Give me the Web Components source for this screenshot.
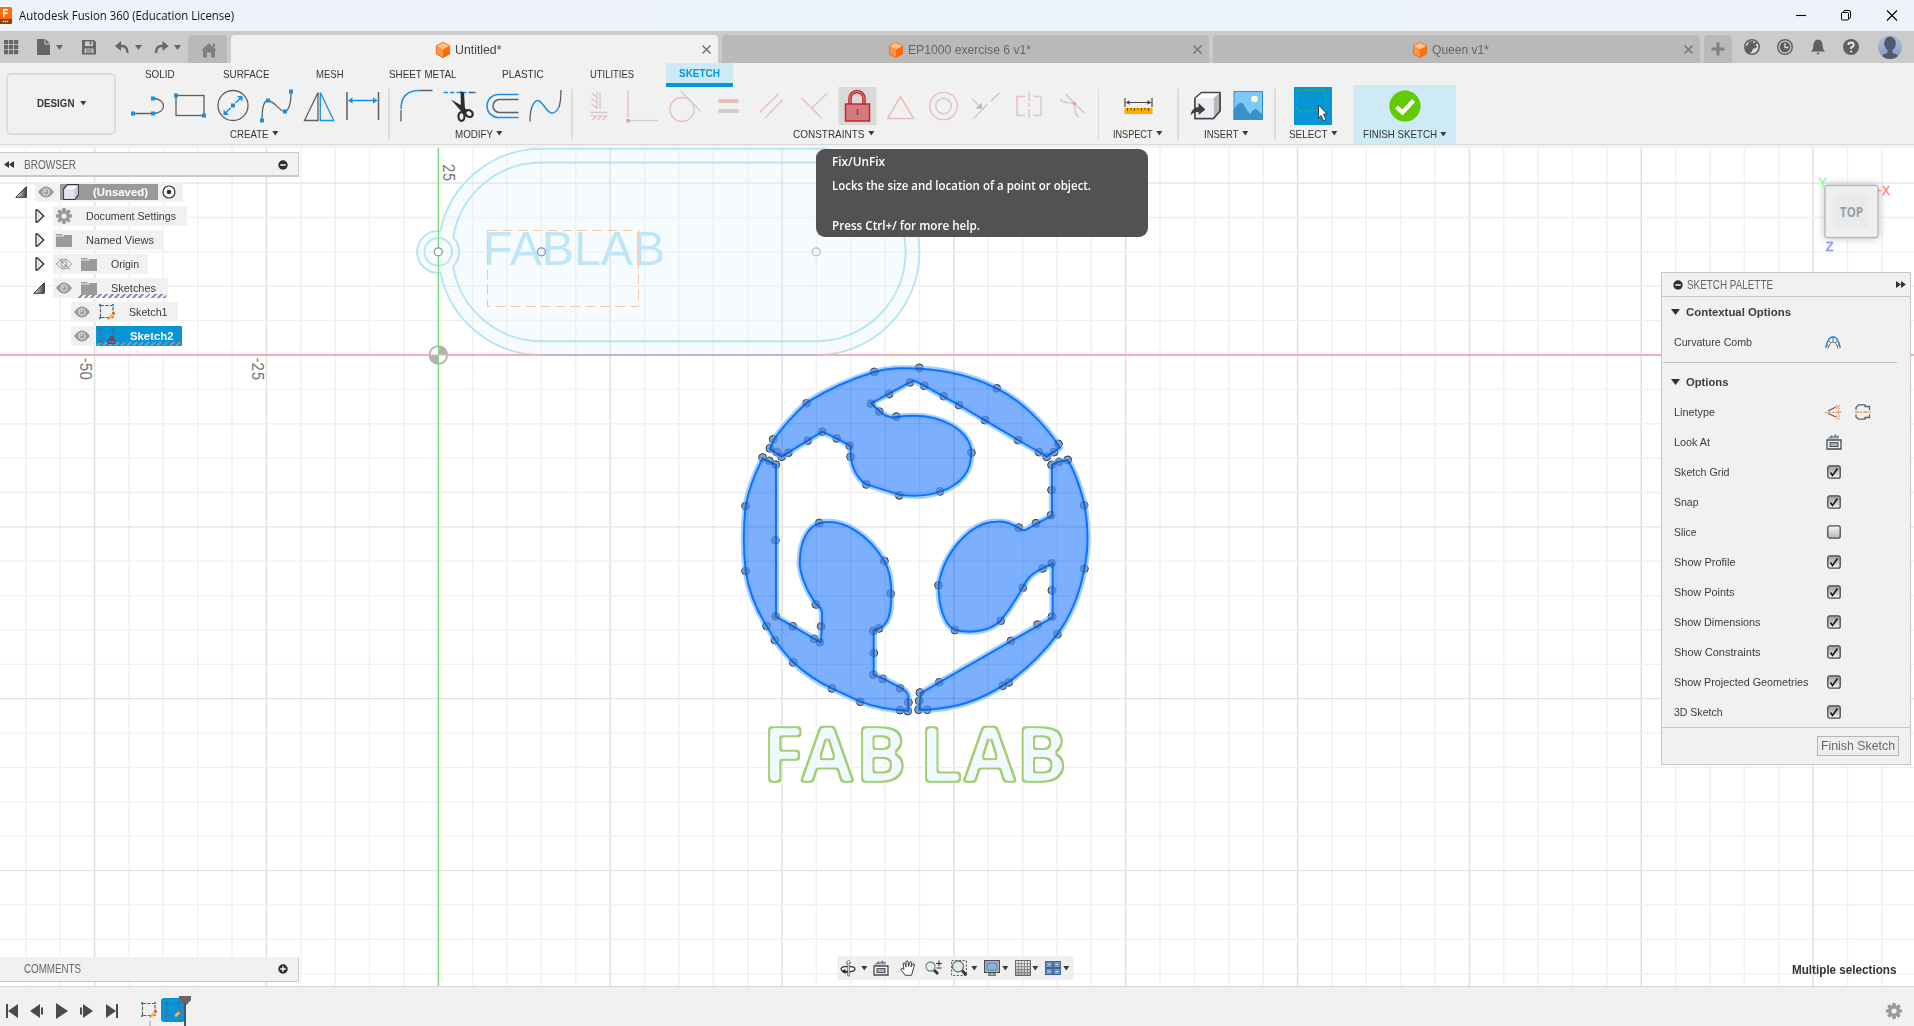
<!DOCTYPE html>
<html lang="en">
<head>
<meta charset="utf-8">
<title>Autodesk Fusion 360</title>
<style>
html,body{margin:0;padding:0;width:1914px;height:1026px;overflow:hidden;background:#fff;font-family:"Liberation Sans",Arial,sans-serif;font-size:11px;color:#3c3c3c}
</style>
</head>
<body>
<fusion-app></fusion-app>
<script>
const B='#1a8fe6',G='#5f5f5f',P='#ebbcbc',L='#cdcdcd';
const sq=(x,y)=>`<rect x="${x-2}" y="${y-2}" width="4" height="4" fill="${B}"/>`;
const ln=(d,c=G,w=1.3,x='')=>`<path d="${d}" fill="none" stroke="${c}" stroke-width="${w}" ${x}/>`;
const cubeTab='<path d="M7 0 14 3.6V12L7 16 0 12V3.6Z" fill="#ff6d0a"/><path d="M7 0 14 3.6 7 7.6 0 3.6Z" fill="#ffc190"/><path d="M0 3.6 7 7.6V16L0 12Z" fill="#ff9447"/><path d="M7 .4 13.600 3.800V11.800L7 15.600 .4 11.800V3.800Z" fill="none" stroke="#d9722b" stroke-width=".8"/>';
const gear=c=>`<g fill="${c}"><path fill-rule="evenodd" d="M8 2.3a5.7 5.7 0 1 0 0 11.4a5.7 5.7 0 1 0 0-11.4zM8 5.4a2.6 2.6 0 1 1 0 5.2a2.6 2.6 0 1 1 0-5.2z"/>${[0,45,90,135,180,225,270,315].map(a=>`<path d="M6.4 0H9.6L10 3.2H6Z" transform="rotate(${a} 8 8)"/>`).join('')}</g>`;
const lookAt='<path d="M1 6V15H15V6Z" fill="#f4f5f7" stroke="#45494f" stroke-width="1.3"/><rect x="4" y="8.6" width="8" height="4" fill="#a9b4c4" stroke="#45494f"/><path d="M2 4.6 6 1.6 5 4 10 .8 9.5 3.2 12.5 2 11.5 4.6" fill="#9aa3ad" stroke="#6a7077" stroke-width=".9"/>';
const sketch=(c,b)=>`<rect x="1.5" y="1.5" width="12.5" height="12" fill="none" stroke="${c}" stroke-dasharray="3.4 1.3" stroke-width="1.2"/><g fill="${b}"><rect width="2" height="2"/><rect x="13" width="2" height="2"/><rect y="13" width="2" height="2"/></g>`;
const pencil='<path d="M9 15.3 8.2 16 9.6 13.4 10.8 15Z" fill="#666"/><path d="M9.2 13.2 13.6 9 15.4 11.2 11 15.2Z" fill="#f7b93c"/><path d="M13 8.8 14.4 7.6 16.4 9.6 15 11Z" fill="#ee3d4a"/>';
const eye='<path d="M0 8Q8 -3 16 8Q8 19 0 8Z" fill="#999"/><circle cx="8" cy="8" r="3.200" fill="none" stroke="#f1f1f1" stroke-width="1"/><circle cx="7.500" cy="7.500" r=".9" fill="#f1f1f1"/>';
const arrow='M0 0H7L3.5 5Z';
const ICONS={
 app:['0 7 12 17',`<path d="M0 7H10.5Q12 7 12 8.5V22.5Q12 24 10.5 24H0Z" fill="#ff6a13"/><path d="M0 19H12V22.5Q12 24 10.5 24H0Z" fill="#8f3c08"/><path d="M3.8 17V9.8H8.2M3.8 13.2H7.6" fill="none" stroke="#fff" stroke-width="1.5"/><path d="M2.5 21.5H8.5" stroke="#f3c9ae" stroke-width="1.5" stroke-dasharray="1.5 .6"/>`],
 min:['1795 9 12 13',ln('M1796 15.5H1806','#000',1.1)],
 max:['1840 9 12 13',`<rect x="1841.5" y="12.5" width="7" height="7.5" rx="1" fill="none" stroke="#000"/>`+ln('M1843.5 12.5V11.5Q1843.5 10.5 1845 10.5H1849Q1850.500 10.5 1850.500 12V17Q1850.500 18.5 1849 18.5','#000',1)],
 cls:['1886 9 12 13',ln('M1887 10.500 1897 20.500M1897 10.500 1887 20.500','#000',1.1)],
 apps:['4 40 15 15',[0,1,2].map(i=>[0,1,2].map(j=>`<rect x="${4+i*5}" y="${40+j*5}" width="4.2" height="4.200" fill="#666"/>`).join('')).join('')],
 file:['37 39 13 16','<path d="M37 39H44.500V44.500H50V55H37Z M45.500 39 50 43.500H45.500Z" fill="#666"/>'],
 save:['82 40 14 14.500','<path fill-rule="evenodd" d="M82 40H94L96 42V54.500H82ZM85 41.500V46H93V41.500ZM84.500 48.500V53H93.500V48.500Z" fill="#666"/><path d="M86 50H92M86 52H92" stroke="#666"/><rect x="89.500" y="41.500" width="2" height="3" fill="#666"/>'],
 undo:['115 41 14 12',ln('M119 46H122Q127.500 46 127.500 53','#666',2.300)+'<path d="M115 46 121 41V51Z" fill="#666"/>'],
 redo:['155 41 14 12',ln('M165 46H161.500Q156 46 156 53','#666',2.300)+'<path d="M168.500 46 162.500 41V51Z" fill="#666"/>'],
 dd:['0 0 7 5',`<path d="${arrow}" fill="#666"/>`],
 ddk:['0 0 7 5',`<path d="M.3 0H6.300L3.300 4.500Z" fill="#3a3a3a"/>`],
 home:['201 43 16 14.500','<path d="M209 43 217 50.500H215V57.500H211V52.500H207V57.500H203V50.500H201Z M213 43.500H215V47H213Z" fill="#808080"/>'],
 cube:['0 0 14 16',cubeTab],
 x:['0 0 9 9',ln('M.5 .5 8.500 8.500M8.500 .5 .5 8.500','#777',1.6)],
 plus:['0 0 14 14',ln('M7 .5V13.500M.5 7H13.500','#808080',3)],
 ext:['1744 39 16 16','<circle cx="1752" cy="47" r="7.200" fill="#dedede" stroke="#5f5f5f" stroke-width="1.600"/><path d="M1745.500 51V46.500L1748.500 44V42L1753.500 40.500 1753 43.500 1755.500 42 1757.500 43 1755 45.500 1757.500 46 1755.500 48.500 1753 48.500 1752 51.500 1749 54Z" fill="#5f5f5f"/>'],
 clock:['1777 39 16 16','<circle cx="1785" cy="47" r="7.300" fill="none" stroke="#5f5f5f" stroke-width="1.500"/><circle cx="1785" cy="47" r="5.300" fill="#5f5f5f"/><path d="M1785 43V47.500H1788.500" fill="none" stroke="#ddd" stroke-width="1.300"/>'],
 bell:['1810 39 16 16','<path d="M1818 39.500Q1822.500 40 1822.500 45Q1822.500 49 1825 51.500H1811Q1813.500 49 1813.500 45Q1813.500 40 1818 39.500Z" fill="#5f5f5f"/><path d="M1816 52.800H1820L1818 54.800Z" fill="#5f5f5f"/>'],
 help:['1843 39 16 16','<circle cx="1851" cy="47" r="8" fill="#5f5f5f"/><path d="M1848.300 45Q1848.300 42.500 1851 42.500T1853.700 45Q1853.700 46.500 1851.200 47.500V49M1851.200 50.600V52.500" fill="none" stroke="#e8e8e8" stroke-width="1.900"/>'],
 avatar:['1878 35 24 24','<defs><linearGradient id="a" x2="0" y2="1"><stop stop-color="#b3c2d6"/><stop offset="1" stop-color="#8197bd"/></linearGradient><clipPath id="c"><circle cx="1890" cy="47" r="12"/></clipPath></defs><circle cx="1890" cy="47" r="12" fill="url(#a)"/><g clip-path="url(#c)" fill="#4d5a70"><ellipse cx="1890" cy="43.500" rx="5.800" ry="7"/><path d="M1887.500 48H1892.500V53Q1898 54 1900 59H1880Q1882 54 1887.500 53Z"/></g>'],
 line:['126.5 87 43 38',ln('M133.500 113.500H153.500C160 113.500 164 110 164 106S160 98.500 153.500 98.500')+sq(133.500,113.500)+sq(153.500,113.500)+sq(153.500,98.500)],
 rect:['169.5 87 43 38',`<rect x="176.500" y="95.500" width="28" height="20" fill="none" stroke="${G}" stroke-width="1.300"/>`+sq(176.500,95.500)+sq(204.500,115.500)],
 circ:['212.5 87 43 38',`<circle cx="233.500" cy="105.500" r="15" fill="none" stroke="${G}" stroke-width="1.300"/>`+ln('M226 113 231 108M236 103 241 98',B,1.500)+sq(233.500,105.500)+`<path d="M224 115V109.500L229.500 115ZM243 96V101.500L237.500 96Z" fill="${B}"/>`],
 spl:['255.5 87 43 38',ln('M262.500 120.500C262.500 108 264 100.500 268.500 100.500C275 101 280 111.500 285.500 111.500C290 110 291.500 102 291.500 91.500')+sq(262.500,120.500)+sq(268.500,100.500)+sq(285.500,111.500)+sq(291.500,91.500)],
 mir:['298.5 87 43 38',ln('M318.500 92.500V120.500H305Z')+ln('M320.800 92.500V120.500H334.300Z',B)],
 dim:['341.5 87 43 38',ln('M347.500 92V120M379 92V120',G,1.500)+ln('M350 100.500H377',B,1.500)+`<path d="M348.500 100.500 353 97.500V103.500ZM378 100.500 373.500 97.500V103.500Z" fill="${B}"/>`],
 fil:['395.5 87 43 38',ln('M401.500 110V121.500M420 90.500H433')+ln('M401.500 109Q401.500 90.500 420 90.500',B,1.500)],
 cut:['438.5 87 43 38',ln('M444 92.500H467',B,1.500,'stroke-dasharray="4.500 2"')+ln('M469 92.500H476',G,1.500)+'<path d="M461 91 464.500 92.500 465.500 109 461.500 111ZM451.500 99.500 463 106 468.500 111 464 114Z" fill="#2e2e2e"/><g fill="none" stroke="#2e2e2e" stroke-width="2.200"><ellipse cx="462" cy="116.500" rx="3" ry="4.300"/><ellipse cx="469.500" cy="113.500" rx="4" ry="3.200" transform="rotate(35 469.500 113.500)"/></g>'],
 off:['481.5 87 43 38',ln('M519 94.500H499A11.500 11.500 0 0 0 499 117.500H519',B,1.600)+ln('M519 99.500H500A6.500 6.500 0 0 0 500 112.500H519',G,1.500)],
 sp2:['524.5 87 43 38',ln('M530.500 121.500Q530.500 112 532.500 107M559.500 107Q561.500 101 561.500 90')+ln('M532.500 107C537 96 541 101 546 108S555 115 559.500 107',B,1.500)],
 hv:['578.5 87 43 38',ln('M592 93 597 97M592 98.500 597 102.500M592 104 597 108M597.500 92V109',P,1.200)+ln('M600.500 92V109M591 112.500H608',L,1.300)+ln('M591 116H608M597 116 593 120M602 116 598 120M607 116 603 120',P,1.200)],
 perp:['621.5 87 43 38',ln('M628.500 90V118',P)+ln('M630 120.500H659',L)+`<rect x="627" y="119" width="3.500" height="3.500" fill="#e2a1a1"/>`],
 tan:['664.5 87 43 38',`<circle cx="682.500" cy="109.500" r="12" fill="none" stroke="${P}" stroke-width="1.300"/>`+ln('M681 91 701 111',L)],
 eq:['707.5 87 43 38',`<rect x="719" y="99" width="20" height="4" fill="${P}"/><rect x="719" y="109" width="20" height="4" fill="${L}"/>`],
 par:['750.5 87 43 38',ln('M760 112.500 779 94',P,1.500)+ln('M765.500 118 783.500 99.500',L,1.500)],
 per2:['793.5 87 43 38',ln('M802 98 822.500 118.500',P,1.500)+ln('M812 108.500 827.500 93.500',L,1.500)],
 lock:['836.5 87 43 38',`<rect x="839" y="87" width="38" height="38" fill="#d9d9d9"/>`+ln('M850.500 104V98.500A7 7 0 0 1 864.500 98.500V104','#c9252d',3.600)+ln('M850.500 104V98.500A7 7 0 0 1 864.500 98.500V104','#e38d90',1)+`<rect x="846" y="104" width="24" height="17" fill="#d27c7f" stroke="#c9252d" stroke-width="1.500"/><path d="M858 109V115" stroke="#c9252d" stroke-width="1.500"/>`],
 tri:['879.5 87 43 38',ln('M901 96.500 914 118.500H888Z',P,1.500)],
 con:['922.5 87 43 38',`<circle cx="944" cy="106" r="13.700" fill="none" stroke="${P}" stroke-width="1.300"/><circle cx="944" cy="106" r="7.800" fill="none" stroke="${L}" stroke-width="1.500"/>`],
 mid:['965.5 87 43 38',ln('M974 119 988 104M973 99 980 106',L,1.500)+ln('M991 101.500 1000 93',P,1.500)+'<path d="M982.500 109V102.500L976 108.500Z" fill="#bdbdbd"/>'],
 sym:['1008.5 87 43 38',ln('M1025.500 96.500H1017.500V115.500H1025.500',P,1.500)+ln('M1029.700 92V120',P,1.300,'stroke-dasharray="9 2 4 2"')+ln('M1034 96.500H1041.500V115.500H1034',L,1.500)],
 cur:['1051.5 87 43 38',ln('M1066 94 1084.500 113',P,1.500)+ln('M1061 99.500Q1063 102.500 1069 102.500T1075.500 108Q1075 115 1079.500 117',L,1.500)+'<circle cx="1075" cy="103.500" r="1.800" fill="#e2a1a1"/>'],
 meas:['1117.5 87 43 38','<rect x="1125" y="108" width="28" height="6" fill="#ffab00"/>'+ln('M1128 108V111M1131.500 108V110M1135 108V111M1138.500 108V110M1142 108V111M1145.500 108V110M1149 108V111','#6b4a00',1)+ln('M1125.500 98V107M1152.500 98V107M1127 102.500H1151','#4a4a4a',1.200)+'<path d="M1126 102.500 1130 100.300V104.700ZM1152 102.500 1148 100.300V104.700Z" fill="#4a4a4a"/>'],
 ins:['1184.5 87 43 38','<path d="M1195.500 98 1202 92.500H1220.500V111L1214 118.500H1195.500Z" fill="#fff" stroke="#45454d" stroke-width="1.500"/><path d="M1214 98 1220 93V111L1214 118Z" fill="#b6b8be"/><path d="M1195.500 98H1214V118.500H1195.500Z" fill="#ececf0"/><path d="M1195.500 98V118.500H1214L1220.500 111V92.500" fill="none" stroke="#45454d" stroke-width="1.500"/><path d="M1191 115.500Q1192 107.500 1199 107V103L1206 109.500 1199 115V112Q1194 111.500 1191 115.500Z" fill="#3f4046"/>'],
 img:['1227.5 87 43 38','<rect x="1234.500" y="91.500" width="28.500" height="28" fill="#7cc8fb" stroke="#3c8fc9"/><path d="M1234 110Q1240 100 1244 104 1248 112 1251 114 1255 107 1258 110L1263 115V120H1234Z" fill="#3c90ca"/><circle cx="1255" cy="99" r="3.300" fill="#fffbc9"/>'],
 sel:['1294 87 38 38','<rect x="1294" y="87" width="38" height="38" fill="#0696d7"/><rect x="1297.500" y="90.500" width="28" height="20.500" fill="none" stroke="#2eb35c" stroke-width="1.200" stroke-dasharray="4 2"/><path d="M1318.500 105 1327 114H1323.500L1326 120 1323.500 121 1321.200 115.500 1318.500 118Z" fill="#fff" stroke="#333" stroke-width=".9"/>'],
 fin:['1388 90 32 32','<circle cx="1404" cy="106" r="15.600" fill="#62cb00"/><path d="M1395.500 107 1401.500 112.500 1412.500 100.500" fill="none" stroke="#fff" stroke-width="4.200"/>'],
 rew:['0 0 10 7','<path d="M5 0V7L0 3.500ZM10 0V7L5 3.500Z" fill="#333"/>'],
 fwd:['0 0 10 7','<path d="M0 0V7L5 3.500ZM5 0V7L10 3.500Z" fill="#333"/>'],
 minus:['0 0 10 10','<circle cx="5" cy="5" r="4.700" fill="#2f2f2f"/><path d="M2.300 5H7.700" stroke="#fff" stroke-width="1.500"/>'],
 add:['0 0 10 10','<circle cx="5" cy="5" r="4.700" fill="#2f2f2f"/><path d="M2.300 5H7.700M5 2.300V7.700" stroke="#fff" stroke-width="1.300"/>'],
 open:['0 0 12 12','<defs><linearGradient id="g"><stop stop-color="#eee"/><stop offset="1" stop-color="#444"/></linearGradient></defs><path d="M11.300 .7V11.300H.8Z" fill="url(#g)" stroke="#333"/>'],
 shut:['0 0 10 14','<path d="M1 1H2.500L8.800 7 2.500 13H1Z" fill="#e6e6e6" stroke="#333" stroke-width="1.300"/>'],
 eye:['0 0 16 16',eye],
 noeye:['0 0 16 16','<path d="M.5 8Q8 -2 15.500 8Q8 18 .5 8Z" fill="none" stroke="#8c8c8c"/><circle cx="8" cy="8" r="3" fill="none" stroke="#8c8c8c"/><path d="M3 2.500 13.500 13.500" stroke="#8c8c8c"/>'],
 gear:['0 0 16 16',gear('#9a9a9a')],
 folder:['0 0 16 16','<path d="M0 2H6L7 3.500H0ZM0 4.500H7.500L8.500 3H16V15H0Z" fill="#9a9a9a"/>'],
 box:['0 0 16 16','<path d="M.7 5 4.500 .7H15.300V10.500L12 15.300H.7Z" fill="#fafafa" stroke="#333a44" stroke-width="1.200"/><path d="M1.300 5H11.500V14.700H1.300Z" fill="#e2e4ee"/><path d="M11.500 5 14.700 1.200V10.300L11.500 14.700Z" fill="#c6c9d6"/>'],
 radio:['0 0 14 14','<circle cx="7" cy="7" r="6" fill="#fff" stroke="#333" stroke-width="1.200"/><circle cx="7" cy="7" r="2.300" fill="#333"/>'],
 sk:['0 0 17 17',sketch('#5f5f5f',B)+pencil],
 skb:['0 0 17 17',sketch('#4f6a7c','#3c6f90')+pencil],
 skr:['0 0 17 17',sketch('#4f6a7c','#50687a')+'<path d="M9.500 11.500H15.500V15.500H9.500ZM11 11.500V9.500Q12.500 8 14 9.500V11.500" fill="none" stroke="#c0202a" stroke-width="1.200"/><rect x="12" y="12.500" width="1.200" height="2" fill="#c0202a"/>'],
 comb:['0 0 16 13',ln('M.7 12Q3 .8 8 .8T15.300 12',B,1.400)+ln('M3 12.500Q5 6 8 6T13 12.500M8 1V6M3.500 4.500 6 7M12.500 4.500 10 7M1.500 9 4 10M14.500 9 12 10','#6a6a6a',1)],
 lt1:['0 0 17 16',ln('M3 7 11 3M3 9.500 11 13','#5f5f5f',1.200)+ln('M0 8.300H17M11 1 15 5M15 1 11 5M11 11.500 15 15.500M15 11.500 11 15.500M13.500 6V10.500','#e8853d',1,'stroke-dasharray="2.500 1"')],
 lt2:['0 0 16 16',ln('M1 6V3.500L3.500 .8H10V2.500H14.500V6M1 10.500V13L3.500 15.200H10V13.500H14.500V10.500','#5f5f5f',1.300)+ln('M0 8.200H16','#e8853d',1.300,'stroke-dasharray="4 1.200 2 1.200"')],
 look:['0 0 16 16',lookAt],
 on:['0 0 14 14','<defs><linearGradient id="k" x2="0" y2="1"><stop stop-color="#9b9b9b"/><stop offset="1" stop-color="#f2f2f2"/></linearGradient></defs><rect x=".8" y=".8" width="12.400" height="12.400" rx="2" fill="url(#k)" stroke="#4a4a4a" stroke-width="1.300"/><path d="M3.500 7.500 5.500 10.500 10.500 3.500" fill="none" stroke="#111" stroke-width="1.500"/>'],
 offc:['0 0 14 14','<defs><linearGradient id="k" x2="0" y2="1"><stop stop-color="#f8f8f8"/><stop offset="1" stop-color="#b5b5b5"/></linearGradient></defs><rect x=".8" y=".8" width="12.400" height="12.400" rx="2" fill="url(#k)" stroke="#4a4a4a" stroke-width="1.300"/>'],
 down:['0 0 9 6','<path d="M0 0H9L4.500 6Z" fill="#2f2f2f"/>'],
 orb:['0 0 16 16','<ellipse cx="8" cy="9" rx="7" ry="2.700" fill="none" stroke="#333" stroke-width="1.300"/><path d="M8.500 0 11 3H9.300V16H7.700V3H6Z" fill="#fff" stroke="#555" stroke-width=".8"/><path d="M1.500 11.500 5.500 9V11H8V12.500H5.500V14Z" fill="#222"/>'],
 hand:['0 0 16 16','<path d="M5 15.300Q2 11 .8 9Q2 7.500 4 9.500L3 3.500Q4 2.300 5 3.500L6 7 6 1.500Q7.200 .3 8 1.500L8.500 6.500 10 1.800Q11.200 1 11.800 2.300L11 7 13 4Q14.500 3.500 14.500 5L13 10 11.500 15.300Z" fill="#fff" stroke="#444" stroke-width="1"/>'],
 zoom:['0 0 17 16','<circle cx="5.500" cy="6.500" r="4.500" fill="#e4eff0" stroke="#7a868c" stroke-width="1.300"/><path d="M9 10 13 14" stroke="#333" stroke-width="2.800"/><path d="M11 3.500H17M14 .5V6.200M11.500 8H16.500" stroke="#333" stroke-width="1.100"/>'],
 zwin:['0 0 16 16','<rect x=".6" y=".6" width="14.800" height="14.800" fill="none" stroke="#555" stroke-dasharray="2.200 1.500"/><circle cx="7" cy="6.500" r="5.500" fill="#dcebea" stroke="#6a767c" stroke-width="1.300"/><path d="M11 10.500 15.300 15" stroke="#333" stroke-width="2.800"/>'],
 disp:['0 0 16 16','<rect x=".7" y=".7" width="14.600" height="11.600" fill="#f5f5f5" stroke="#444" stroke-width="1.300"/><rect x="2.800" y="2.800" width="10.400" height="7.400" fill="#8db2e0" stroke="#4a6fa3"/><path d="M4.500 15.300V14L8 12.800 11.500 14V15.300Z" fill="#eee" stroke="#444"/>'],
 grid:['0 0 16 16','<defs><linearGradient id="q" x2="0" y2="1"><stop stop-color="#fff"/><stop offset="1" stop-color="#aab3c0"/></linearGradient></defs><rect x=".6" y=".6" width="14.800" height="14.800" fill="url(#q)" stroke="#555"/><path d="M3.600 0V16M6.600 0V16M9.500 0V16M12.500 0V16M0 3.600H16M0 6.600H16M0 9.500H16M0 12.500H16" stroke="#777" stroke-width=".8"/>'],
 view:['0 0 16 14','<g fill="#8fb4dd" stroke="#3f608f" stroke-width="1.300"><rect x=".7" y=".7" width="6.600" height="5.700"/><rect x="8.700" y=".7" width="6.600" height="5.700"/><rect x=".7" y="7.700" width="6.600" height="5.700"/><rect x="8.700" y="7.700" width="6.600" height="5.700"/></g><path d="M2.500 2.500H5.500V4.500H2.500ZM10.500 2.500H13.500V4.500H10.500ZM2.500 9.500H5.500V11.500H2.500ZM10.500 9.500H13.500V11.500H10.500Z" fill="#c3d8f0" stroke="#5c83b8" stroke-width=".7"/>'],
 t1:['0 0 12 14','<path d="M0 0H2V14H0ZM12 0V14L2 7Z" fill="#4a4a4a"/>'],
 t2:['0 0 13 14','<path d="M10 0V14L0 7ZM11 3.500H13V10.500H11Z" fill="#4a4a4a"/>'],
 t3:['0 0 12 16','<path d="M0 0 12 8 0 16Z" fill="#4a4a4a"/>'],
 t4:['0 0 13 14','<path d="M3 0 13 7 3 14ZM0 3.500H2V10.500H0Z" fill="#4a4a4a"/>'],
 t5:['0 0 12 14','<path d="M12 0H10V14H12ZM0 0V14L10 7Z" fill="#4a4a4a"/>'],
 mark:['179 996 12 30','<path d="M179 996H191V1000L187 1004.500H183L179 1000Z" fill="#666"/><path d="M185 1003V1026" stroke="#555" stroke-width="2"/>'],
};
const el=(name,css,html,after)=>customElements.define(name,class extends HTMLElement{
 connectedCallback(){
  if(!this.shadowRoot){const r=this.attachShadow({mode:'open'});
   const t=document.createElement('template');
   t.innerHTML=`<style>:host{box-sizing:border-box}*{box-sizing:border-box}${css}</style>`+(typeof html==='function'?html(this):html);
   r.appendChild(document.importNode(t.content,true));}
  if(after)after(this);
 }});
const ic=(n,ml=0,mt=0)=>`<ui-icon name="${n}" style="margin-left:${ml}px;margin-top:${mt}px"></ui-icon>`;
const ft=(t,w,st='')=>`<fit-text w="${w}" style="${st}">${t}</fit-text>`;

el('ui-icon',':host{display:block;flex:none}svg{display:block;overflow:visible}',h=>{
 const [vb,m]=ICONS[h.getAttribute('name')];const [, ,w,hh]=vb.split(' ');
 return `<svg width="${w}" height="${hh}" viewBox="${vb}">${m}</svg>`});
el('fit-text',':host{display:block;flex:none;white-space:nowrap;line-height:16px}span{display:inline-block;transform-origin:0 50%}','<span><slot></slot></span>',h=>{
 const w=+h.getAttribute('w'),s=h.shadowRoot.querySelector('span');h.style.width=w+'px';
 const n=s.getBoundingClientRect().width;if(n)s.style.transform=`scaleX(${w/n})`});

el('title-bar',`:host{display:flex;align-items:center;height:31px;background:linear-gradient(90deg,#ecf3f9,#eef2fb 20%,#ebf4f8 55%,#eef3fb 75%,#eef3fa);font:12px "Open Sans","Noto Sans",sans-serif;color:#111}`,
 ic('app')+ft('Autodesk Fusion 360 (Education License)',215,'margin-left:7px')+ic('min',1561)+ic('max',33)+ic('cls',34));

el('doc-tab',`:host{display:flex;align-items:center;height:28px;border-radius:4px 4px 0 0;background:#b9b9b9;color:#666;font-size:12px;margin-left:4px}:host([active]){background:#f1f1f1;color:#444}.e{margin-left:auto;margin-right:7px;margin-top:0}`,
 '<slot></slot><ui-icon class="e" name="x"></ui-icon>');
el('tab-bar',`:host{display:flex;align-items:flex-end;height:32px;background:#cbcbcb}.q,.r{display:flex;height:32px;align-items:center}.h,.p{display:flex;align-items:center;justify-content:center;height:28px;background:#b9b9b9;border-radius:4px 4px 0 0}.q{width:188px}`,
 `<div class="q">${ic('apps',4)+ic('file',18)+ic('dd',6)+ic('save',19)+ic('undo',19)+ic('dd',6)+ic('redo',13)+ic('dd',5)}</div>
 <div class="h" style="width:39px">${ic('home',2,3)}</div>
 <doc-tab active style="width:487px">${ic('cube',205,2)+ft('Untitled*',46.5,'margin-left:5px;margin-top:2px')}</doc-tab>
 <doc-tab style="width:487px">${ic('cube',167,2)+ft('EP1000 exercise 6 v1*',123,'margin-left:5px;margin-top:2px')}</doc-tab>
 <doc-tab style="width:487px">${ic('cube',200,2)+ft('Queen v1*',57,'margin-left:5px;margin-top:2px')}</doc-tab>
 <div class="p" style="width:28px;margin-left:4px">${ic('plus')}</div>
 <div class="r">${ic('ext',12)+ic('clock',17)+ic('bell',17)+ic('help',17)+ic('avatar',19)}</div>`);

el('ribbon-group',`:host{display:block;flex:none;height:59px}.i{display:flex;height:40px;padding-top:2px}.l{display:flex;align-items:center;height:17px}`,
 h=>`<div class="i">${h.getAttribute('icons').split(' ').map(n=>ic(n,n==='sel'?+h.getAttribute('pad')||0:0)).join('')}</div><div class="l" style="margin-left:${h.getAttribute('lx')}px">${ft(h.getAttribute('label'),h.getAttribute('lw'))}${ic('ddk',3.5)}</div>`);
const sep=ml=>`<i style="margin-left:${ml}px"></i>`;
el('ribbon-bar',`:host{display:flex;height:82px;background:#f1f1f1;border-bottom:1px solid #d9d9d9;color:#333}
 .d{display:flex;align-items:center;margin:10px 0 0 6px;width:110.300px;height:62px;border:2px solid #dcdcdc;border-radius:5px;font-weight:bold;padding:0 0 2px 29px}
 .m{width:1780px}.t{display:flex;height:22px;align-items:center}.g{display:flex}
 .s{display:flex;align-items:center;justify-content:center;width:67px;height:24px;background:#cdeaf5;color:#0696d7;border-bottom:4px solid #0696d7;font-weight:bold;margin:2px 0 0 32px}
 i{width:1.5px;height:51px;background:#dcdcdc;margin-top:4px;flex:none}
 .f{display:flex;flex-direction:column;align-items:center;width:103px;height:59px;background:#cdeaf5;margin-left:20.500px;padding-top:5px}.fl{display:flex;align-items:center;height:16px;margin-top:4px}`,
 `<div class="d">${ft('DESIGN',37.5)+ic('ddk',5)}</div><div class="m"><div class="t">${
 [['SOLID',29.5,28.5],['SURFACE',46.5,48.5],['MESH',27.5,46.5],['SHEET METAL',67.5,45.5],['PLASTIC',41.7,45.5],['UTILITIES',44,46.5]].map(a=>ft(a[0],a[1],`margin-left:${a[2]}px`)).join('')}<div class="s">${ft('SKETCH',41)}</div></div>
 <div class="g"><ribbon-group style="margin-left:10.200px;width:258px" icons="line rect circ spl mir dim" label="CREATE" lx="103.5" lw="38.5"></ribbon-group>${sep(4)}
 <ribbon-group style="margin-left:5.5px;width:172px" icons="fil cut off sp2" label="MODIFY" lx="59.5" lw="38"></ribbon-group>${sep(4)}
 <ribbon-group style="margin-left:4.800px;width:516px" icons="hv perp tan eq par per2 lock tri con mid sym cur" label="CONSTRAINTS" lx="215.500" lw="71.500"></ribbon-group>${sep(4)}
 <ribbon-group style="margin-left:18px;width:43px" icons="meas" label="INSPECT" lx="-4" lw="39.500"></ribbon-group>${sep(17)}
 <ribbon-group style="margin-left:5.500px;width:86px" icons="ins img" label="INSERT" lx="20" lw="34.500"></ribbon-group>${sep(4)}
 <ribbon-group style="margin-left:13.200px;width:44px" icons="sel" pad="5" label="SELECT" lx="0" lw="38.500"></ribbon-group>
 <div class="f">${ic('fin')}<div class="fl">${ft('FINISH SKETCH',74)+ic('ddk',3)}</div></div></div></div>`);

const X0=438.3,Y0=355,S=34.37;
let gr='';
for(let i=-12;i<=42;i++){const x=X0+i*S;gr+=`<path d="M${x} 148V986" stroke="${i%5?'#f1f1f1':'#e0e0e0'}" stroke-width="1.500"/>`}
for(let i=-5;i<=18;i++){const y=Y0+i*S;gr+=`<path d="M0 ${y}H1914" stroke="${i%5?'#f0f0f0':'#e2e2e2'}" stroke-width="1.300"/>`}
// Grid lines that show through the selected profiles, in the emblem's own 3x units.
let inner='';
for(let i=9;i<=19;i++)inner+=`<path d="M${(X0+i*S-730)*3} 0V1100" stroke-opacity="${i%5?.13:.26}"/>`;
for(let i=1;i<=10;i++)inner+=`<path d="M0 ${(Y0+i*S-350)*3}H1110" stroke-opacity="${i%5?.13:.26}"/>`;
const shapes=['M120 297L130 272C150 240 195 190 230 158C290 120 370 85 433 66C480 52 520 55 568 56C650 60 730 80 800 115C870 150 940 215 990 293L950 320L927 306L864 270L765 211L687 165L641 140L583 107L552 92L540 97L423 160L448 183Q475 207 500 201C640 182 725 250 724 308C724 370 690 405 630 425C590 440 540 438 508 434L409 403C380 385 365 350 362 320V288L320 265L277 245L233 272L155 320Z',
'M98 325L138 345V800L272 877C276 850 276 810 276 789C274 775 264 765 258 762C225 715 205 660 210 625C212 570 235 530 268 520C340 500 420 560 463 633C482 665 484 700 484 731C484 790 475 825 447 835L431 843V974L458 985L510 1012Q535 1025 535 1040V1082C480 1080 430 1070 391 1055L306 1015C250 990 220 965 190 937C160 905 145 885 135 870L110 828C80 780 55 720 47 663C40 600 40 530 47 468C55 420 75 370 98 325Z',
'M966 345L985 335L1013 331C1040 370 1055 430 1064 466C1075 530 1075 600 1063 656C1050 730 1020 800 982 853C950 895 900 950 836 996L818 1007C760 1045 680 1075 592 1079L568 1079L572 1030L628 997L968 802V640L938 655C900 672 890 690 878 713C870 725 850 765 812 812C780 842 730 852 675 840C640 825 625 760 626 706C640 610 720 515 800 515C830 512 850 525 866 533Q875 545 890 538L918 522L966 497Z'];
const pts=[[120,295],[130,268],[140,306],[230,160],[433,66],[568,54],[800,115],[985,282],[972,306],[950,320],[927,306],[864,270],[765,210],[687,165],[641,138],[583,107],[540,97],[477,132],[423,161],[448,185],[499,200],[724,308],[630,424],[508,436],[409,403],[362,320],[359,287],[320,265],[277,245],[233,272],[175,308],[155,320],
[98,323],[118,333],[137,344],[47,468],[136,571],[47,663],[110,828],[135,870],[190,937],[306,1015],[391,1055],[510,1080],[533,1083],[535,1057],[510,1015],[458,987],[430,974],[431,909],[430,843],[447,835],[482,731],[463,633],[268,519],[258,763],[274,829],[270,877],[252,867],[188,829],[137,799],
[965,345],[988,336],[1013,330],[1062,466],[1063,656],[982,853],[836,997],[818,1007],[592,1079],[566,1079],[568,1053],[570,1028],[628,997],[843,873],[923,824],[966,800],[966,721],[965,640],[938,655],[878,713],[812,812],[675,840],[626,706],[866,533],[918,520],[963,496],[965,420]];
el('sketch-canvas',':host{display:block;height:838px}svg{display:block}text{white-space:pre}',
`<svg width="1914" height="838" viewBox="0 148 1914 838">
<defs><filter id="soft" x="-5%" y="-15%" width="110%" height="130%" color-interpolation-filters="sRGB"><feGaussianBlur in="SourceAlpha" stdDeviation="1.800"/><feComponentTransfer result="s"><feFuncA type="linear" slope="5" intercept="-1"/></feComponentTransfer>
<feMorphology in="s" operator="erode" radius="1.500" result="e"/><feFlood flood-color="#a3cf72"/><feComposite in2="s" operator="in" result="o"/><feFlood flood-color="#f0f9ff"/><feComposite in2="e" operator="in" result="f"/><feMerge><feMergeNode in="o"/><feMergeNode in="f"/></feMerge></filter>
<clipPath id="em">${shapes.map(d=>`<path d="${d}"/>`).join('')}</clipPath></defs>
${gr}
<path d="M440.400 231.300A103.100 103.100 0 0 1 541.400 148.800H816.300A103.100 103.100 0 0 1 816.300 355H541.400A103.100 103.100 0 0 1 440.400 272.600A20.800 20.800 0 1 1 440.400 231.300Z" fill="#dcf3fb" fill-opacity=".26"/>
<g fill="none" stroke="#b9e2f4" stroke-width="1.900"><path d="M440.400 231.300A103.100 103.100 0 0 1 541.400 148.800H816.300A103.100 103.100 0 0 1 816.300 355H541.400A103.100 103.100 0 0 1 440.400 272.600A20.800 20.800 0 1 1 440.400 231.300"/>
<path d="M453.200 237.500A89.350 89.350 0 0 1 541.400 162.500H816.300A89.350 89.350 0 0 1 816.300 341.200H541.400A89.350 89.350 0 0 1 453.200 266.300A20.800 20.800 0 0 0 453.200 237.500"/><circle cx="438.300" cy="251.800" r="13.800"/></g>
<path d="M0 355H1914" stroke="#f3b0b6" stroke-width="1.800"/><path d="M541 355H816" stroke="#c4b5cc" stroke-width="1.800"/><path d="M438.500 148V986" stroke="#77de77" stroke-width="1.300"/>
<text x="483" y="265" font-size="48" textLength="182" lengthAdjust="spacingAndGlyphs" fill="#bfe6f6">FABLAB</text>
<rect x="487.500" y="230.500" width="151" height="76" fill="none" stroke="#f1c9a7" stroke-width="1.100" stroke-dasharray="10 5"/>
<g fill="none" stroke="#8b9296" stroke-width="1.200"><circle cx="438.300" cy="251.800" r="4" fill="#fff"/><circle cx="541.400" cy="251.800" r="4"/><circle cx="816.300" cy="251.800" r="4" stroke="#b6bcbf"/></g>
<g><circle cx="438.300" cy="355" r="8.800" fill="#fff" fill-opacity=".8" stroke="#b9b9b9" stroke-width="2"/><path d="M438.300 355V345.500A9.500 9.500 0 0 1 447.800 355ZM438.300 355V364.500A9.500 9.500 0 0 1 428.800 355Z" fill="#b2b2b2"/><path d="M438.500 345V365" stroke="#77de77"/><path d="M429 355H447.500" stroke="#e9b9bd"/></g>
<g font-family="Roboto,sans-serif" font-size="16.500" fill="#7a7a7a"><text transform="translate(80 358) rotate(90)" textLength="22" lengthAdjust="spacingAndGlyphs">-50</text><text transform="translate(252 358) rotate(90)" textLength="22" lengthAdjust="spacingAndGlyphs">-25</text><text transform="translate(442.500 164) rotate(90)" textLength="17" lengthAdjust="spacingAndGlyphs">25</text></g>
<g transform="translate(730 350) scale(.33333)">${pts.map(p=>`<circle cx="${p[0]}" cy="${p[1]}" r="12" fill="#5a6068" fill-opacity=".3" stroke="#383c42" stroke-width="3"/>`).join('')}
${shapes.map(d=>`<path d="${d}" fill="none" stroke="#8fc3f8" stroke-opacity=".8" stroke-width="19" stroke-linejoin="round"/>`).join('')}
${shapes.map(d=>`<path d="${d}" fill="#8abaff" fill-opacity=".88"/>`).join('')}
<g clip-path="url(#em)" stroke="#2f5fae" stroke-width="4">${inner}</g>
${shapes.map(d=>`<path d="${d}" fill="#1a74ff" fill-opacity=".22" stroke="#0a74ff" stroke-width="6" stroke-linejoin="round"/>`).join('')}
${pts.map(p=>`<circle cx="${p[0]}" cy="${p[1]}" r="11.500" fill="#143c80" fill-opacity=".26" stroke="#2b3340" stroke-opacity=".3" stroke-width="2"/>`).join('')}</g>
<text x="762 800.500 855 900 919 963 1015.500" y="781.500" font-family="Open Sans,sans-serif" font-weight="bold" font-size="77.500" filter="url(#soft)">FAB LAB</text>
<rect x="1825" y="185.500" width="53" height="52" rx="2" fill="#f6f6f6" fill-opacity=".85" stroke="#b7b7b7" stroke-width="1.300" style="filter:drop-shadow(0 0 4px #bbb)"/><rect x="1835" y="195" width="33" height="33" fill="#e9eaec"/>
<g font-family="Open Sans,sans-serif" font-weight="bold" text-anchor="middle"><text x="1851.500" y="216.500" font-size="14" textLength="23" lengthAdjust="spacingAndGlyphs" fill="#9b9fa4">TOP</text></g>
<g font-size="13.500" stroke-width=".4"><text x="1818.500" y="187" textLength="8" lengthAdjust="spacingAndGlyphs" fill="#8dfb8d" stroke="#8dfb8d">Y</text><text x="1882" y="195" textLength="8" lengthAdjust="spacingAndGlyphs" fill="#ff7d7d" stroke="#ff7d7d">X</text><text x="1825.500" y="251" textLength="8" lengthAdjust="spacingAndGlyphs" fill="#8f8fff" stroke="#8f8fff">Z</text></g><path d="M1878 190.500H1881" stroke="#f77" stroke-width="1.500"/>
</svg>`);

el('tree-row',`:host{display:flex;height:20px;margin-bottom:4px;align-items:center}.b{display:flex;align-items:center;height:20px;background:#f1f1f1;flex:none}`,
 h=>{const g=n=>h.getAttribute(n);return `${g('tri')?ic(g('tri'),+g('tx')):''}<div class="b" style="width:${g('w')}px;margin-left:${g('gap')}px"><slot></slot></div>`});
el('browser-panel',`:host{display:block;width:299px}.h{display:flex;align-items:center;height:25px;background:#f1f1f1;border:1px solid #c8c8c8;border-left:0;border-bottom-width:2px;font-size:12px;color:#666;padding:1px 0 0 4px;margin-bottom:5px}
 .u,.s2{display:flex;align-items:center;color:#fff;font-weight:bold;background-color:#999}.u{height:16px;width:98px;margin-left:6px}.s2{background-color:#0696d7;height:20px;width:86px;margin-left:6px}
 .k{background-image:repeating-linear-gradient(135deg,transparent 0 2.200px,#8595b5 2.200px 4.300px);background-size:100% 4px;background-repeat:no-repeat;background-position:0 100%}
 .k1{display:flex;align-items:center;height:20px;width:88px;margin-left:6px;padding-left:3px}`,
 `<div class="h">${ic('rew')+ft('BROWSER',52,'margin-left:10px')+ic('minus',201.500)}</div>
 <tree-row tri="open" tx="15" gap="8" w="148">${ic('eye',3)}<div class="u">${ic('box',3)+ft('(Unsaved)',55,'margin-left:14px')}</div>${ic('radio',3.5)}</tree-row>
 <tree-row tri="shut" tx="35" gap="8" w="134">${ic('gear',3)+ft('Document Settings',90,'margin-left:14px')}</tree-row>
 <tree-row tri="shut" tx="35" gap="8" w="110">${ic('folder',3)+ft('Named Views',68,'margin-left:14px')}</tree-row>
 <tree-row tri="shut" tx="35" gap="8" w="95">${ic('noeye',3)+ic('folder',9)+ft('Origin',28,'margin-left:14px')}</tree-row>
 <tree-row tri="open" tx="33" gap="8" w="115">${ic('eye',3)}<div class="k k1">${ic('folder')+ft('Sketches',45,'margin-left:14px')}</div></tree-row>
 <tree-row gap="71" w="107">${ic('eye',3)+ic('sk',9)+ft('Sketch1',38.500,'margin-left:13px')}</tree-row>
 <tree-row gap="71" w="111">${ic('eye',3)}<div class="s2 k">${ic('skr',3)+ft('Sketch2',43.5,'margin-left:13.500px')}</div></tree-row>`);

el('palette-row',':host{display:flex;height:30px;align-items:center;padding-left:11.8px}.v{display:flex;margin-left:auto;width:84.5px;align-items:center}',
 '<slot></slot><div class="v"><slot name="v"></slot></div>');
const rows=[['Sketch Grid',55.5,1],['Snap',24.5,1],['Slice',22.5,0],['Show Profile',61.5,1],['Show Points',60.5,1],['Show Dimensions',86.5,1],['Show Constraints',86.5,1],['Show Projected Geometries',134.5,1],['3D Sketch',48.5,1]];
const v=n=>`<span slot="v" style="display:flex;gap:14px;align-items:center">${n}</span>`;
el('sketch-palette',`:host{display:block;width:250px;height:493px;background:#f1f1f1;border:1px solid #c6c6c6}.h{display:flex;align-items:center;height:24px;border-bottom:1px solid #c6c6c6;font-size:12px;color:#666;padding:0 0 0 10.500px}
 .t{display:flex;align-items:center;height:30px;padding-left:9px;font-weight:bold}.r{height:1px;background:#bdbdbd;margin:5px 13px 5px 1px}.f{height:35px;border-top:1px solid #c6c6c6;display:flex;justify-content:flex-end;align-items:center;padding:1px 11px 0 0;margin-top:0}
 .b{height:20px;width:82px;border:1px solid #b5b5b5;background:#eee;color:#666;font-size:13px;display:flex;align-items:center;justify-content:center}`,
 `<div class="h">${ic('minus')+ft('SKETCH PALETTE',86,'margin-left:4px')+ic('fwd',123.5)}</div>
 <div class="t">${ic('down')+ft('Contextual Options',105,'margin-left:5.500px')}</div>
 <palette-row>${ft('Curvature Comb',78)+v(ic('comb',-.5))}</palette-row><div class="r"></div>
 <div class="t" style="height:29px;padding-bottom:1px">${ic('down')+ft('Options',42.500,'margin-left:5.500px')}</div>
 <palette-row>${ft('Linetype',41)+v(ic('lt1',-.5)+ic('lt2',-1))}</palette-row>
 <palette-row>${ft('Look At',36)+v(ic('look'))}</palette-row>
 ${rows.map(r=>`<palette-row>${ft(r[0],r[1])+v(ic(r[2]?'on':'offc',1.500,-1))}</palette-row>`).join('')}
 <div class="f"><div class="b">${ft('Finish Sketch',74)}</div></div>`);

el('nav-bar',':host{display:flex;align-items:center;width:237px;height:24px;background:#f0f0f0}',
 ic('orb',3)+ic('ddk',4.500)+ic('look',5.500)+ic('hand',10.500)+ic('zoom',9)+ic('zwin',9)+ic('ddk',4.500)+ic('disp',5.500)+ic('ddk',2.500)+ic('grid',5.500)+ic('ddk',1.800)+ic('view',6)+ic('ddk',2));
el('comment-bar',':host{display:flex;align-items:center;width:299px;height:25px;background:#f1f1f1;border-right:1px solid #c8c8c8;border-bottom:1.500px solid #c8c8c8;font-size:12px;color:#666;padding:0 0 0 24px}',
 ft('COMMENTS',57)+ic('add',196.500));
el('tool-tip',':host{display:block;width:332px;height:88px;background:#525252;border-radius:9px;color:#fff;font:600 12px "Open Sans","Noto Sans",sans-serif;padding:5px 16px}div{height:24px}div+div+div{margin-top:16px}',
 `<div>${ft('Fix/UnFix',53)}</div><div>${ft('Locks the size and location of a point or object.',259)}</div><div>${ft('Press Ctrl+/ for more help.',148)}</div>`);
el('time-line',`:host{display:flex;height:40px;background:#f1f1f1;border-top:1px solid #d6d6d6;align-items:flex-start}.p{display:flex;align-items:center;height:48px}
 .a,.b{display:flex;flex-direction:column;align-items:center}.a{margin-left:20px;width:23px;padding-top:15px}.a ui-icon{margin-right:1px}.b{width:24px;height:24px;background:#0696d7;border-radius:3px;margin:11px 0 0 0;padding-top:4px}u{width:2px;height:5px;background:#c8c8c8;margin-top:2px}.b u{margin-top:3px}`,
 `<div class="p">${ic('t1',6)+ic('t2',12)+ic('t3',13)+ic('t4',12)+ic('t5',13)}</div><div class="a">${ic('sk')}<u></u></div><div class="b">${ic('skb')}<u></u></div>${ic('mark',-6,9)}${ic('gear',1695,16)}`);

el('fusion-app',`:host{display:block;width:1914px;height:1026px;background:#fff}.c{position:relative;height:838px}.g{height:3px;background:#f3f3f3}.o{position:absolute}.m{font-size:12px;font-weight:bold;color:#333}`,
 `<title-bar></title-bar><tab-bar></tab-bar><ribbon-bar></ribbon-bar><div class="g"></div>
 <div class="c"><sketch-canvas></sketch-canvas>
 <browser-panel class="o" style="left:0;top:4px"></browser-panel>
 <sketch-palette class="o" style="left:1661px;top:124px"></sketch-palette>
 <tool-tip class="o" style="left:816px;top:1px"></tool-tip>
 <nav-bar class="o" style="left:837px;top:808px"></nav-bar>
 <comment-bar class="o" style="left:0;top:809px"></comment-bar>
 <div class="o m" style="left:1792px;top:814px">${ft('Multiple selections',104.500)}</div></div>
 <time-line></time-line>`);
</script>
</body>
</html>
